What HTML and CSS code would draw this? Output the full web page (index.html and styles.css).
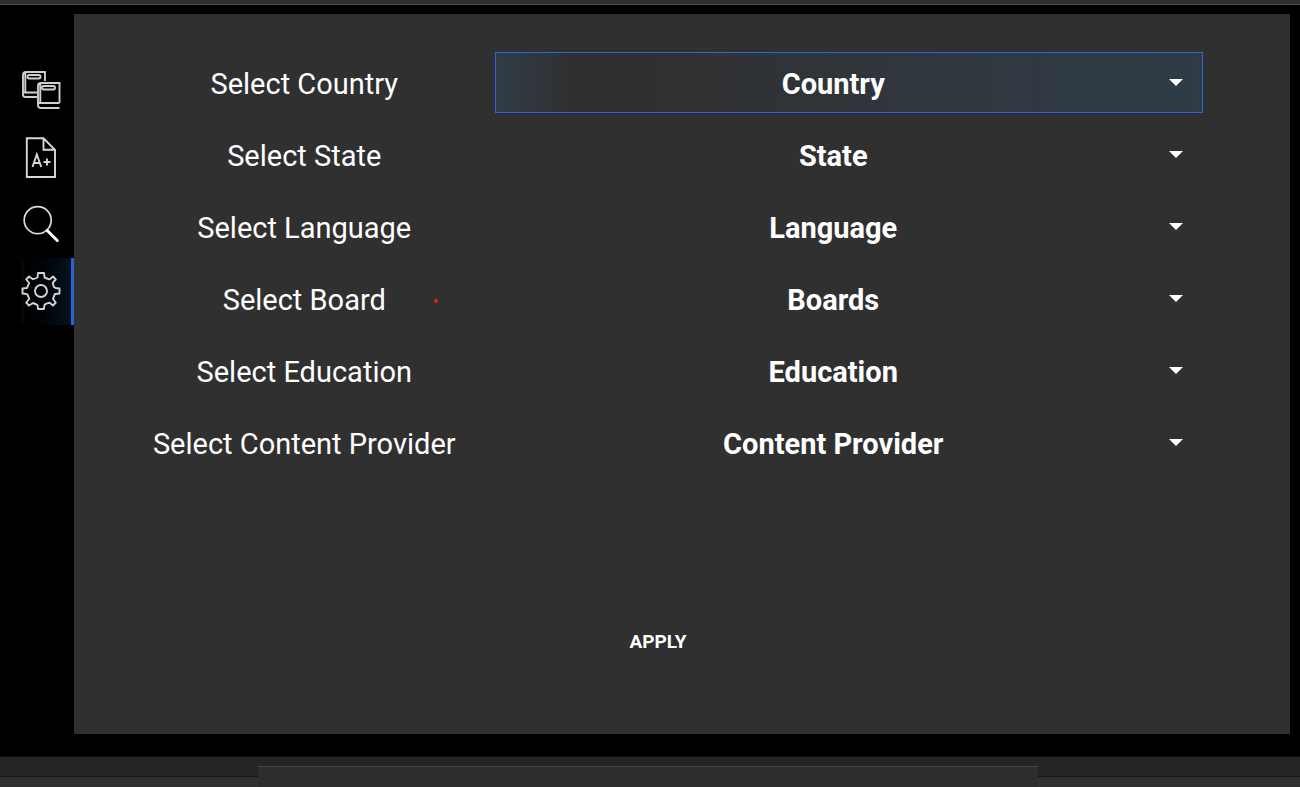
FILE: index.html
```html
<!DOCTYPE html>
<html lang="en">
<head>
<meta charset="utf-8">
<title>Settings</title>
<link rel="stylesheet" href="styles.css">
</head>
<body>
<div class="screen">
  <nav class="sidebar" aria-label="Main">
    <a class="nav-item" href="#library" aria-label="Library">
      <svg class="icon" viewBox="1 1 40 42" fill="none" stroke="#cfcfcf" stroke-width="1.900">
        <path d="M17 28H5.500a2.500 2.500 0 0 1-2.500-2.500V6Q3 3 6 3H25V12M5.300 3V23.500M3.500 23.500H17"/>
        <rect x="7.500" y="6" width="13" height="3.500" rx="1.700"/>
        <path d="M39.500 34H18V17Q18 14 21 14H39.500V34M18 34V36Q18 39 21 39H39.500M20.300 15V34"/>
        <rect x="22" y="17" width="13" height="3.500" rx="1.700"/>
      </svg>
    </a>
    <a class="nav-item" href="#grades" aria-label="Grades">
      <svg class="icon" viewBox="1 2 40 42" fill="none" stroke="#d8d8d8" stroke-width="1.900">
        <path d="M6.800 3.300H23.500L35 14.800V42H6.800ZM23.500 3.300V14.800H35"/>
        <path d="M12.500 32L16.800 19.500L21.200 32M14 28H19.800M23.500 27H30.500M27 23.500V30.500"/>
      </svg>
    </a>
    <a class="nav-item" href="#search" aria-label="Search">
      <svg class="icon" viewBox="1 1 40 42" fill="none" stroke="#dcdcdc" stroke-width="1.700">
        <circle cx="17.700" cy="17.200" r="13.500"/>
        <path d="M27.200 27.500L37.300 37.500" stroke="#fff" stroke-width="3" stroke-linecap="round"/>
      </svg>
    </a>
    <a class="nav-item nav-item-active" href="#settings" aria-label="Settings" aria-current="page">
      <svg class="icon" viewBox="-20 -20 40 42" fill="none" stroke="#d4d4d4" stroke-width="1.900" stroke-linejoin="round">
        <circle r="6"/>
        <path d="M-3 -18H3L3.500 -13.500Q5.500 -12.800 7 -12L8.500 -11.600L12 -14.500L14.800 -11.500L11.800 -8.300Q12 -6 13 -4L14.500 -3L18.500 -2.500V2.500L14 3Q13 5 12 8L14.800 11.500L12 14.500L8.500 11.800Q6 12.300 4 13.300L3.300 14.500L3 18H-3L-3.500 14Q-5.500 13 -8 12L-12 14.500L-14.800 11.500L-11.800 8Q-12.500 5.500 -13.500 3.500L-14.500 3L-18.500 2.500V-2.500L-14 -3Q-13 -5.500 -11.800 -8L-14.800 -11.500L-12 -14.500L-8 -11.800Q-5.800 -12.500 -3.500 -13.500Z"/>
      </svg>
    </a>
  </nav>
  <main class="panel">
    <form class="settings">
      <div class="field">
        <label class="label" for="country">Select Country</label>
        <select class="select select-focused" id="country"><option>Country</option></select>
      </div>
      <div class="field">
        <label class="label" for="state">Select State</label>
        <select class="select" id="state"><option>State</option></select>
      </div>
      <div class="field">
        <label class="label" for="language">Select Language</label>
        <select class="select" id="language"><option>Language</option></select>
      </div>
      <div class="field">
        <label class="label" for="board">Select Board<span class="marker"></span></label>
        <select class="select" id="board"><option>Boards</option></select>
      </div>
      <div class="field">
        <label class="label" for="education">Select Education</label>
        <select class="select" id="education"><option>Education</option></select>
      </div>
      <div class="field">
        <label class="label" for="provider">Select Content Provider</label>
        <select class="select" id="provider"><option>Content Provider</option></select>
      </div>
      <button class="apply" type="button">APPLY</button>
    </form>
  </main>
</div>
<footer class="bezel"><div class="ledge"></div></footer>
</body>
</html>
```

FILE: styles.css
```css
* {
  box-sizing: border-box;
}

body {
  margin: 0;
  min-height: 100vh;
  display: flex;
  flex-direction: column;
  background: #000;
  color: #fff;
  font-family: Roboto, "Liberation Sans", sans-serif;
  border-top: 4px solid #2f3032;
}

.screen {
  flex: 1;
  display: flex;
  padding: 9px 10px 22px 21px;
  border-top: 1px solid #4a4b4d;
}

.sidebar {
  width: 53px;
  padding-top: 43px;
}

.nav-item {
  display: flex;
  align-items: center;
  height: 67px;
}

.nav-item-active {
  background: linear-gradient(90deg, #020b10, #000 12%, #000408 45%, #04121c);
  border-right: 3px solid #2a62dc;
}

.icon {
  flex: none;
  width: 40px;
  height: 42px;
}

.panel {
  flex: 1;
  padding: 38px 87px 38px 39px;
  background: #303030;
}

.settings {
  display: flex;
  flex-direction: column;
  gap: 11px;
}

.field {
  position: relative;
  display: grid;
  grid-template-columns: 35fr 65fr;
  align-items: center;
}

.field::after {
  content: "";
  position: absolute;
  right: 20px;
  top: 27px;
  width: 14px;
  height: 7px;
  background: #fff;
  clip-path: polygon(0 0, 100% 0, 50% 100%);
  pointer-events: none;
}

.label {
  position: relative;
  text-align: center;
  font-size: 29px;
  line-height: 36px;
  padding: 3px 0 0 1px;
}

.marker {
  position: absolute;
  right: 57px;
  top: 20px;
  width: 4px;
  height: 4px;
  border-radius: 50%;
  background: #e81c1c;
}

.select {
  appearance: none;
  width: 100%;
  height: 61px;
  margin: 0;
  padding: 3px 31px 0 0;
  border: 1px solid transparent;
  border-radius: 0;
  outline: none;
  background: none;
  color: #fff;
  font: 700 29px/36px Roboto, "Liberation Sans", sans-serif;
  text-align: center;
  text-align-last: center;
}

.select-focused {
  border-color: #2a66e0;
  background: linear-gradient(90deg, #303c45, #30373f 4%, #303030 10%, #303030 20%, #30373f 65%, #2f3c45);
}

.apply {
  align-self: center;
  margin-top: 141px;
  padding: 4px 12px;
  border: 0;
  background: none;
  color: #fff;
  font: 700 19px/26px Roboto, "Liberation Sans", sans-serif;
}

.bezel {
  height: 31px;
  padding-top: 9px;
  border-top: 1px solid #111;
  background: linear-gradient(#242424 0 19px, #171717 19px 20px, #2f3032 20px);
}

.ledge {
  width: 60%;
  height: 21px;
  margin-left: calc(20% - 2px);
  border-top: 1px solid #444;
  background: #2d2d2d;
}
```
